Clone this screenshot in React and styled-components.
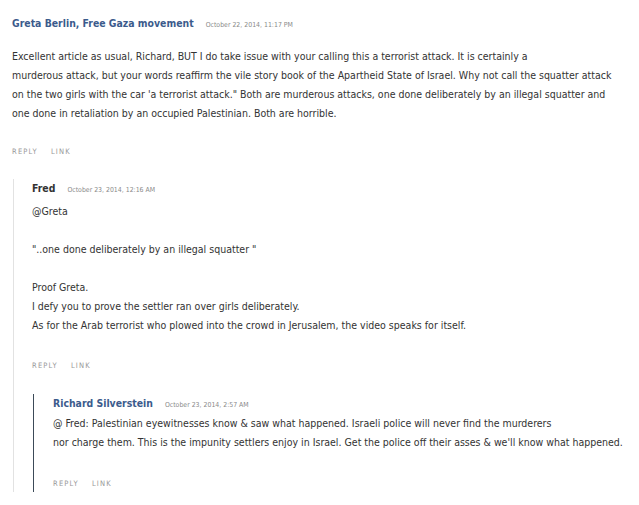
import React from 'react';
import styled, { createGlobalStyle } from 'styled-components';

const GlobalStyle = createGlobalStyle`
  body {
    margin: 0;
    background: #fff;
    font-family: "DejaVu Sans Condensed", "Liberation Sans", sans-serif;
  }
`;

const Page = styled.div`
  width: 639px;
  height: 505px;
  overflow: hidden;
  padding: 17px 0 0 12px;
  box-sizing: border-box;
`;

const Comment = styled.div`
  display: flex;
  flex-direction: column;
`;

const Children = styled.div`
  margin-top: ${(p) => p.top}px;
  padding: ${(p) => p.padTop}px 0 ${(p) => p.padBottom}px ${(p) => p.indent}px;
  border-left: 1px solid ${(p) => p.line};
  margin-left: 1px;
`;

const Header = styled.div`
  display: flex;
  align-items: baseline;
  gap: 12px;
  height: 20px;
`;

const Author = styled.span`
  font-size: 10.4px;
  font-weight: bold;
  color: ${(p) => (p.blue ? '#3b5b8c' : '#333')};
`;

const Date = styled.span`
  font-size: 6.9px;
  color: #8a8a8a;
`;

const Body = styled.div`
  font-size: 10.5px;
  line-height: 19px;
  color: #333;
  white-space: nowrap;
  margin-top: ${(p) => p.top || 0}px;
`;

const Para = styled.p`
  margin: 0 0 ${(p) => (p.gap ? 19 : 0)}px;
`;

const Actions = styled.div`
  display: flex;
  gap: 13px;
  margin-top: ${(p) => p.top}px;
  font-size: 7.5px;
  letter-spacing: 1.2px;
  color: #999;
`;

export default function App() {
  return (
    <Page>
      <GlobalStyle />
      <Comment>
        <Header>
          <Author blue>Greta Berlin, Free Gaza movement</Author>
          <Date>October 22, 2014, 11:17 PM</Date>
        </Header>
        <Body top={10}>
          Excellent article as usual, Richard, BUT I do take issue with your calling this a terrorist attack. It is certainly a
          <br />
          murderous attack, but your words reaffirm the vile story book of the Apartheid State of Israel. Why not call the squatter attack
          <br />
          on the two girls with the car 'a terrorist attack." Both are murderous attacks, one done deliberately by an illegal squatter and
          <br />
          one done in retaliation by an occupied Palestinian. Both are horrible.
        </Body>
        <Actions top={24}>
          <span>REPLY</span>
          <span>LINK</span>
        </Actions>
        <Children top={23} padTop={3} padBottom={0} indent={18} line="#e2e2e2">
          <Comment>
            <Header>
              <Author>Fred</Author>
              <Date>October 23, 2014, 12:16 AM</Date>
            </Header>
            <Body top={0}>
              <Para gap>@Greta</Para>
              <Para gap>"..one done deliberately by an illegal squatter "</Para>
              <Para>
                Proof Greta.
                <br />
                I defy you to prove the settler ran over girls deliberately.
                <br />
                As for the Arab terrorist who plowed into the crowd in Jerusalem, the video speaks for itself.
              </Para>
            </Body>
            <Actions top={26}>
              <span>REPLY</span>
              <span>LINK</span>
            </Actions>
            <Children top={24} padTop={3} padBottom={4} indent={19} line="#3c4a58">
              <Comment>
                <Header>
                  <Author blue>Richard Silverstein</Author>
                  <Date>October 23, 2014, 2:57 AM</Date>
                </Header>
                <Body top={-3}>
                  @ Fred: Palestinian eyewitnesses know &amp; saw what happened. Israeli police will never find the murderers
                  <br />
                  nor charge them. This is the impunity settlers enjoy in Israel. Get the police off their asses &amp; we'll know what happened.
                </Body>
                <Actions top={27}>
                  <span>REPLY</span>
                  <span>LINK</span>
                </Actions>
              </Comment>
            </Children>
          </Comment>
        </Children>
      </Comment>
    </Page>
  );
}
